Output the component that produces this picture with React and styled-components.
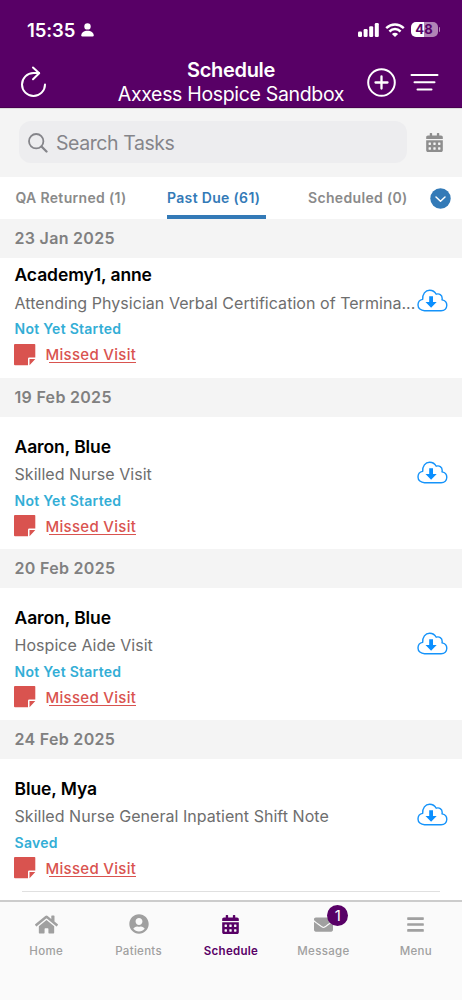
import React, { Component } from 'react';
import styled, { createGlobalStyle } from 'styled-components';
import { FaHome, FaUserCircle, FaCalendarAlt, FaEnvelope, FaBars } from 'react-icons/fa';

const GlobalStyle = createGlobalStyle`
  * {
    box-sizing: border-box;
  }

  body {
    margin: 0;
    background: white;
    font-family: Inter, "Liberation Sans", sans-serif;
  }
`;

const Container = styled.div`
  display: flex;
  flex-direction: column;
  width: 462px;
  height: 1000px;
  overflow: hidden;
`;

const Header = styled.header`
  flex: none;
  height: 108px;
  background: #580066;
  border-bottom: 1px solid #48004f;
  color: white;
`;

const StatusBar = styled.div`
  display: flex;
  justify-content: space-between;
  align-items: center;
  height: 58px;
  padding: 1px 22px 0 27px;
`;

const Clock = styled.div`
  display: flex;
  align-items: center;
  gap: 6px;
  font-size: 18.5px;
  font-weight: 600;
  letter-spacing: -0.1px;
`;

const StatusIcons = styled.div`
  display: flex;
  align-items: center;
  gap: 6px;
`;

const BatteryWrapper = styled.div`
  display: flex;
  align-items: center;
  gap: 1px;

  &::after {
    content: '';
    width: 1.5px;
    height: 5px;
    border-radius: 0 2px 2px 0;
    background: #b184b6;
  }
`;

const Battery = styled.div`
  width: 27px;
  height: 15px;
  border-radius: 5px;
  background: linear-gradient(to right, white 48%, #b184b6 48%);
  color: #580066;
  font-size: 13px;
  font-weight: 700;
  line-height: 15px;
  text-align: center;
`;

const TitleBar = styled.div`
  display: grid;
  grid-template-columns: 100px 1fr 100px;
  height: 48px;
`;

const TitleSide = styled.div`
  display: flex;
  align-items: center;
  gap: 14px;
  padding: ${props => (props.$right ? '0 0 0 5px' : '0 0 0 20px')};
`;

const TitleText = styled.div`
  text-align: center;
  white-space: nowrap;
`;

const Title = styled.h1`
  margin: 0;
  font-size: 20px;
  font-weight: 600;
  line-height: 24px;
  letter-spacing: -0.3px;
`;

const Subtitle = styled.p`
  margin: 0;
  font-size: 19.5px;
  line-height: 24px;
  letter-spacing: -0.33px;
`;

const SearchBar = styled.div`
  display: flex;
  flex: none;
  align-items: center;
  gap: 18px;
  height: 69px;
  padding: 0 0 2px 19px;
  background: #f4f4f4;
  border-top: 1px solid #dcdcdc;
  color: #8e8e8e;
`;

const SearchField = styled.div`
  display: flex;
  align-items: center;
  gap: 8px;
  width: 388px;
  height: 42px;
  padding: 1px 0 0 9px;
  border-radius: 12px;
  background: #ededef;
  color: #85858a;
  font-size: 19.5px;
  letter-spacing: -0.43px;
`;

const Tabs = styled.nav`
  display: flex;
  flex: none;
  height: 42px;
`;

const Tab = styled.div`
  width: ${props => props.$width}px;
  height: 42px;
  margin-right: ${props => props.$gap}px;
  border-bottom: 4px solid ${props => (props.$active ? '#337ab7' : 'transparent')};
  color: ${props => (props.$active ? '#337ab7' : '#8a8a8a')};
  font-size: 14px;
  font-weight: 600;
  line-height: 42px;
  letter-spacing: 0.33px;
  padding-left: ${props => props.$indent || 0}px;
  white-space: nowrap;
`;

const MoreTabs = styled.div`
  display: flex;
  align-items: center;
  height: 42px;
`;

const TaskList = styled.main`
  flex: none;
  height: 681px;
`;

const DateHeader = styled.h2`
  height: 39px;
  margin: 0;
  padding-left: 14.5px;
  background: #f4f4f4;
  color: #808080;
  font-size: 16px;
  font-weight: 600;
  line-height: 39px;
  letter-spacing: 0.3px;
`;

const TaskWrapper = styled.div`
  display: flex;
  align-items: flex-start;
  justify-content: space-between;
  height: ${props => (props.$first ? 119.6 : 132.2)}px;
  padding: ${props => (props.$first ? 0 : 13)}px 14px 0 14.5px;
`;

const TaskDetails = styled.div`
  padding-top: 3px;
  white-space: nowrap;
`;

const Patient = styled.p`
  margin: 0;
  color: black;
  font-size: 17.5px;
  font-weight: 600;
  line-height: 28.5px;
  letter-spacing: -0.1px;
`;

const TaskName = styled.p`
  width: 402px;
  margin: 0;
  color: #6e6e6e;
  font-size: 16px;
  line-height: 27.5px;
  letter-spacing: 0.04px;
`;

const Status = styled.p`
  margin: 0;
  color: #33aed6;
  font-size: 14px;
  font-weight: 600;
  line-height: 24px;
  letter-spacing: 0.27px;
`;

const Missed = styled.div`
  display: flex;
  align-items: center;
  gap: 9.5px;
  height: 27px;
  margin-left: -0.5px;
  color: #d9534f;
  font-size: 15px;
  font-weight: 500;
  letter-spacing: 0.3px;
`;

const MissedLabel = styled.span`
  line-height: 17px;
  background: linear-gradient(#d9534f, #d9534f) 3px 100% / 100% 1px no-repeat;
`;

const Download = styled.div`
  height: 23px;
  margin-top: 31px;
`;

const Divider = styled.div`
  height: 1px;
  margin: 0 22px;
  background: #e0e0e0;
`;

const TabBar = styled.footer`
  display: grid;
  flex: none;
  grid-template-columns: repeat(5, 1fr);
  height: 100px;
  border-top: 2px solid #cccccc;
  background: #fafafa;
`;

const NavItem = styled.div`
  display: flex;
  position: relative;
  flex-direction: column;
  align-items: center;
  color: ${props => (props.$active ? '#580066' : '#a0a0a0')};
  font-size: 11.5px;
  font-weight: ${props => (props.$active ? 600 : 500)};
  letter-spacing: 0.3px;
`;

const NavIcon = styled.div`
  display: flex;
  align-items: center;
  height: 44px;
  margin-bottom: -2px;
`;

const Badge = styled.span`
  position: absolute;
  top: 3px;
  left: 50px;
  width: 21px;
  height: 21px;
  border-radius: 50%;
  background: #580066;
  color: white;
  font-size: 15px;
  font-weight: 400;
  line-height: 21px;
  letter-spacing: 0;
  text-align: center;
`;

const CloudIcon = () => (
  <svg width="31" height="23" viewBox="0 0 31 23" fill="none">
    <path
      d="M7.5 21.7C3.8 21.7 1 19.3 1 16c0-2.900 2-5.100 4.700-5.600C5.300 5.200 8.300 1.200 12.600 1.200c3 0 5.300 1.500 6.600 4 2.900-1.100 6 .7 6 4.300 0 .5-.1.9-.2 1.400 2.900.6 4.800 2.700 4.800 5.400 0 3.100-2.300 5.400-5.700 5.400z"
      stroke="#1593fa"
      strokeWidth="1.400"
      strokeLinejoin="round"
    />
    <path d="M12.200 7.200h3.800v5.700h3.700l-5.600 5.900-5.600-5.900h3.700z" fill="#0a8fff" />
  </svg>
);

const NoteIcon = () => (
  <svg width="22" height="22" viewBox="0 0 22 22">
    <path d="M1 0h19.500q.8 0 .8.800v12.600h-6q-1.300 0-1.300 1.300v6.600H1q-1 0-1-1V1q0-1 1-1zM15.500 15h5.800l-5.800 6.300z" fill="#d9534f" />
  </svg>
);

const tasks = [
  { date: '23 Jan 2025', patient: 'Academy1, anne', name: 'Attending Physician Verbal Certification of Termina...', status: 'Not Yet Started' },
  { date: '19 Feb 2025', patient: 'Aaron, Blue', name: 'Skilled Nurse Visit', status: 'Not Yet Started' },
  { date: '20 Feb 2025', patient: 'Aaron, Blue', name: 'Hospice Aide Visit', status: 'Not Yet Started' },
  { date: '24 Feb 2025', patient: 'Blue, Mya', name: 'Skilled Nurse General Inpatient Shift Note', status: 'Saved' }
];

const navItems = [
  { label: 'Home', icon: <FaHome size={23} /> },
  { label: 'Patients', icon: <FaUserCircle size={20} /> },
  { label: 'Schedule', icon: <FaCalendarAlt size={19} />, active: true },
  { label: 'Message', icon: <FaEnvelope size={19} />, badge: 1 },
  { label: 'Menu', icon: <FaBars size={19} /> }
];

class App extends Component {
  renderTask = (task, index) => (
    <React.Fragment key={task.date}>
      <DateHeader>{task.date}</DateHeader>
      <TaskWrapper $first={index === 0}>
        <TaskDetails>
          <Patient>{task.patient}</Patient>
          <TaskName>{task.name}</TaskName>
          <Status>{task.status}</Status>
          <Missed>
            <NoteIcon />
            <MissedLabel>Missed Visit</MissedLabel>
          </Missed>
        </TaskDetails>
        <Download>
          <CloudIcon />
        </Download>
      </TaskWrapper>
    </React.Fragment>
  );

  render() {
    return (
      <Container>
        <GlobalStyle />

        <Header>
          <StatusBar>
            <Clock>
              15:35
              <svg width="13" height="14" viewBox="0 0 13 14" fill="white">
                <circle cx="6.500" cy="3.400" r="3.200" />
                <path d="M.3 12.300C.3 9.700 3 7.800 6.500 7.800s6.200 1.900 6.200 4.500q0 1.200-1.100 1.200H1.400Q.3 13.500.3 12.300z" />
              </svg>
            </Clock>
            <StatusIcons>
              <svg width="21" height="14" viewBox="0 0 21 14" fill="white">
                <rect x="0" y="8.500" width="4" height="5.500" rx="1.200" />
                <rect x="5.600" y="6" width="4" height="8" rx="1.200" />
                <rect x="11.200" y="3.200" width="4" height="10.800" rx="1.200" />
                <rect x="16.800" y="0" width="4" height="14" rx="1.200" />
              </svg>
              <svg width="20" height="14" viewBox="0 0 20 14" fill="none" stroke="white" strokeWidth="2.500">
                <path d="M1.200 5.100Q5.200 1.500 10 1.500T18.800 5.100" />
                <path d="M4.400 8.500Q7 6.100 10 6.100T15.600 8.500" />
                <path d="M10 14L6.900 10.900Q10 8.700 13.100 10.900z" fill="white" stroke="none" />
              </svg>
              <BatteryWrapper>
                <Battery>48</Battery>
              </BatteryWrapper>
            </StatusIcons>
          </StatusBar>
          <TitleBar>
            <TitleSide>
              <svg width="27" height="32" viewBox="0 0 27 32" fill="none" stroke="white" strokeWidth="2" strokeLinecap="round" strokeLinejoin="round">
                <path d="M25 18.500A11.500 11.500 0 1 1 13.500 7H19" />
                <path d="M13 1.500l6.200 5.700-6.200 6" />
              </svg>
            </TitleSide>
            <TitleText>
              <Title>Schedule</Title>
              <Subtitle>Axxess Hospice Sandbox</Subtitle>
            </TitleText>
            <TitleSide $right>
              <svg width="29" height="29" viewBox="0 0 29 29" fill="none" stroke="white" strokeWidth="2" strokeLinecap="round">
                <circle cx="14.500" cy="14.500" r="13.300" />
                <path d="M14.500 8.500v12M8.500 14.500h12" strokeWidth="2.300" />
              </svg>
              <svg width="29" height="19" viewBox="0 0 29 19" stroke="white" strokeWidth="2" strokeLinecap="round">
                <path d="M1.500 2h26M4.500 9.200h20M7.500 16.500h14" />
              </svg>
            </TitleSide>
          </TitleBar>
        </Header>

        <SearchBar>
          <SearchField>
            <svg width="20" height="20" viewBox="0 0 20 20" fill="none" stroke="#85858a" strokeWidth="1.800" strokeLinecap="round">
              <circle cx="8.200" cy="8.200" r="7.200" />
              <path d="M13.500 13.500l5 5" strokeWidth="2.300" />
            </svg>
            Search Tasks
          </SearchField>
          <FaCalendarAlt size={19} />
        </SearchBar>

        <Tabs>
          <Tab $width={142} $gap={25} $indent={15.5}>QA Returned (1)</Tab>
          <Tab $width={99} $gap={42} $active>Past Due (61)</Tab>
          <Tab $width={99} $gap={23}>Scheduled (0)</Tab>
          <MoreTabs>
            <svg width="21" height="21" viewBox="0 0 21 21">
              <circle cx="10.500" cy="10.500" r="10.200" fill="#337ab7" />
              <path d="M6 9l4.500 4.200L15 9" fill="none" stroke="white" strokeWidth="1.500" strokeLinecap="round" strokeLinejoin="round" />
            </svg>
          </MoreTabs>
        </Tabs>

        <TaskList>
          {tasks.map(this.renderTask)}
          <Divider />
        </TaskList>

        <TabBar>
          {navItems.map(item => (
            <NavItem key={item.label} $active={item.active}>
              <NavIcon>{item.icon}</NavIcon>
              {item.label}
              {item.badge && <Badge>{item.badge}</Badge>}
            </NavItem>
          ))}
        </TabBar>
      </Container>
    );
  }
}

export default App;
